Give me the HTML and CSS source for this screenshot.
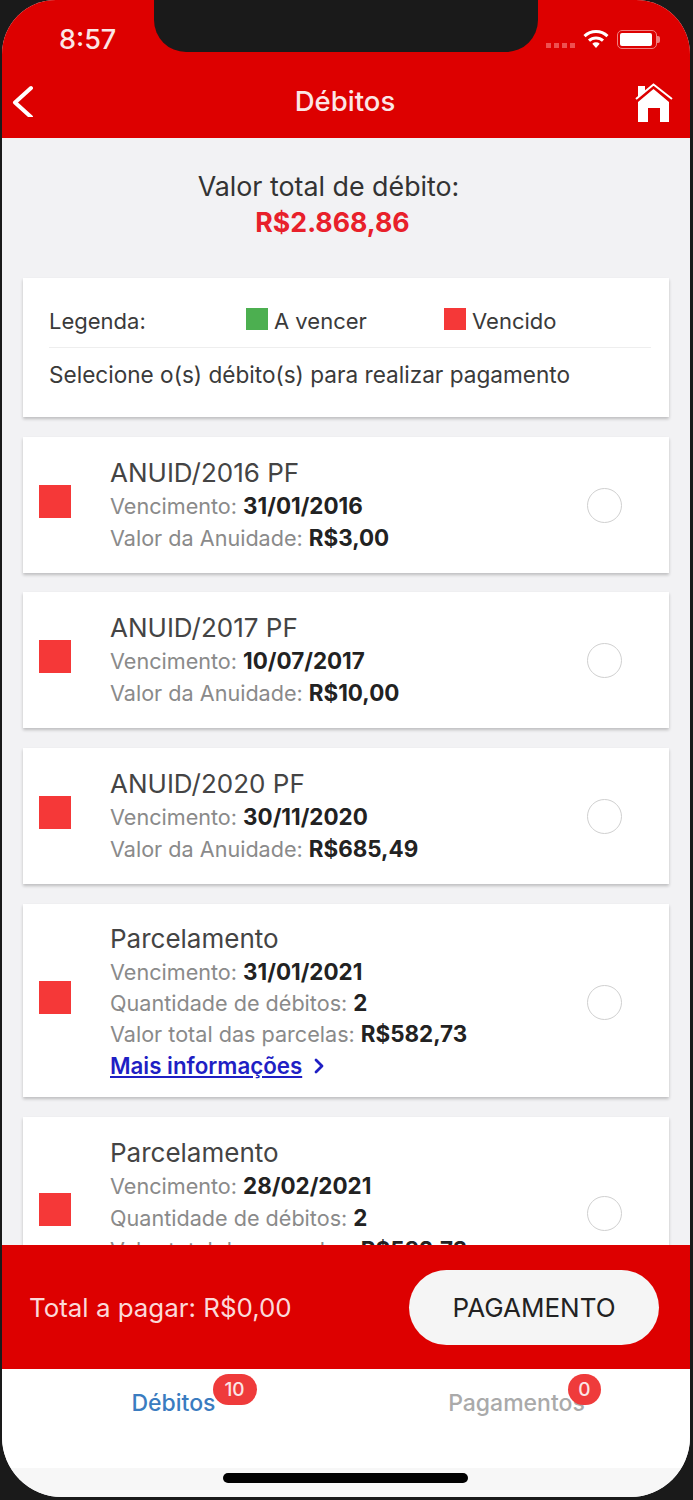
FILE: index.html
```html
<!DOCTYPE html>
<html lang="pt-BR">
<head>
    <meta charset="UTF-8">
    <meta name="viewport" content="width=device-width, initial-scale=1.0">
    <title>Débitos</title>
    <link rel="stylesheet" href="styles.css">
</head>
<body>
    <div class="screen">
        <div class="notch"></div>
        <header class="top">
            <div class="status">
                <span class="time">8:57</span>
                <div class="status-icons">
                    <div class="signal"><i></i><i></i><i></i><i></i></div>
                    <svg class="wifi" viewBox="0 0 26 20">
                        <path d="M1.5 7.2a16.5 16.5 0 0 1 23 0" fill="none" stroke="#fff" stroke-width="3"/>
                        <path d="M6 11.7a10.2 10.2 0 0 1 14 0" fill="none" stroke="#fff" stroke-width="3"/>
                        <path d="M9.3 14.8a5.4 5.4 0 0 1 7.4 0L13 19z" fill="#fff"/>
                    </svg>
                    <div class="battery"><div class="battery-fill"></div></div>
                </div>
            </div>
            <nav class="nav">
                <svg class="back" viewBox="0 0 26 32">
                    <path d="M22 3 6 17.5 22 32" fill="none" stroke="#fff" stroke-width="4" stroke-linecap="round" stroke-linejoin="round"/>
                </svg>
                <h1>Débitos</h1>
                <svg class="home" viewBox="0 0 38 39">
                    <path d="M3 3h7v5l-7 6z" fill="#fff"/>
                    <path d="M1 16 18.5 1.5 37 16" fill="none" stroke="#fff" stroke-width="2"/>
                    <path d="M18.5 6 3 19v20h10V25h12v14h9V19z" fill="#fff"/>
                </svg>
            </nav>
        </header>

        <main class="content">
            <section class="total">
                <p class="total-label">Valor total de débito:</p>
                <p class="total-value">R$2.868,86</p>
            </section>

            <section class="card legend">
                <div class="legend-row">
                    <span class="legend-title">Legenda:</span>
                    <span class="legend-item legend-green"><i class="swatch green"></i>A vencer</span>
                    <span class="legend-item"><i class="swatch red"></i>Vencido</span>
                </div>
                <p class="legend-hint">Selecione o(s) débito(s) para realizar pagamento</p>
            </section>

            <article class="card debt">
                <i class="mark"></i>
                <div class="debt-info">
                    <h2>ANUID/2016 PF</h2>
                    <p>Vencimento: <b>31/01/2016</b></p>
                    <p>Valor da Anuidade: <b>R$3,00</b></p>
                </div>
                <i class="radio"></i>
            </article>

            <article class="card debt">
                <i class="mark"></i>
                <div class="debt-info">
                    <h2>ANUID/2017 PF</h2>
                    <p>Vencimento: <b>10/07/2017</b></p>
                    <p>Valor da Anuidade: <b>R$10,00</b></p>
                </div>
                <i class="radio"></i>
            </article>

            <article class="card debt">
                <i class="mark"></i>
                <div class="debt-info">
                    <h2>ANUID/2020 PF</h2>
                    <p>Vencimento: <b>30/11/2020</b></p>
                    <p>Valor da Anuidade: <b>R$685,49</b></p>
                </div>
                <i class="radio"></i>
            </article>

            <article class="card debt debt-compact">
                <i class="mark"></i>
                <div class="debt-info">
                    <h2>Parcelamento</h2>
                    <p>Vencimento: <b>31/01/2021</b></p>
                    <p>Quantidade de débitos: <b>2</b></p>
                    <p>Valor total das parcelas: <b>R$582,73</b></p>
                    <p class="more">
                        <a href="#">Mais informações</a>
                        <svg class="more-arrow" viewBox="0 0 12 18">
                            <path d="m3 3 6 6-6 6" fill="none" stroke="#1f1fc4" stroke-width="2.8" stroke-linecap="round" stroke-linejoin="round"/>
                        </svg>
                    </p>
                </div>
                <i class="radio"></i>
            </article>

            <article class="card debt debt-cut">
                <i class="mark"></i>
                <div class="debt-info">
                    <h2>Parcelamento</h2>
                    <p>Vencimento: <b>28/02/2021</b></p>
                    <p>Quantidade de débitos: <b>2</b></p>
                    <p>Valor total das parcelas: <b>R$582,73</b></p>
                </div>
                <i class="radio"></i>
            </article>
        </main>

        <div class="paybar">
            <span class="paybar-total">Total a pagar: R$0,00</span>
            <button class="pay-btn">PAGAMENTO</button>
        </div>

        <footer class="tabs">
            <div class="tab tab-active">
                <span class="tab-label">Débitos<span class="badge badge-wide">10</span></span>
            </div>
            <div class="tab tab-idle">
                <span class="tab-label">Pagamentos<span class="badge">0</span></span>
            </div>
            <div class="home-bar"></div>
        </footer>
    </div>
</body>
</html>
```

FILE: styles.css
```css
* {
    box-sizing: border-box;
}

html, body {
    margin: 0;
    height: 1500px;
    background: #1a1a1a;
    font-family: Inter, "Liberation Sans", sans-serif;
    overflow: hidden;
}

h1, h2, p {
    margin: 0;
    font-weight: 400;
}

i {
    display: block;
}

.screen {
    position: relative;
    display: flex;
    flex-direction: column;
    width: 688px;
    height: 1497px;
    margin-left: 2px;
    border-radius: 54px 54px 60px 60px;
    overflow: hidden;
    background: #f2f2f4;
}

.notch {
    position: absolute;
    top: 0;
    left: 152px;
    width: 384px;
    height: 52px;
    background: #1a1a1a;
    border-radius: 0 0 32px 32px;
}

/* header */
.top {
    flex: none;
    height: 138px;
    background: #dd0000;
    color: #fff;
}

.status {
    display: flex;
    justify-content: space-between;
    align-items: center;
    height: 64px;
    padding: 14px 33px 0 57px;
}

.time {
    font-size: 27px;
    font-weight: 500;
    color: #fbe6e6;
}

.status-icons {
    display: flex;
    align-items: center;
    gap: 8px;
}

.signal {
    display: flex;
    gap: 3px;
    margin-top: 12px;
}

.signal i {
    width: 5px;
    height: 5px;
    background: #ee5050;
}

.wifi {
    width: 26px;
    height: 20px;
}

.battery {
    position: relative;
    width: 40px;
    height: 19px;
    padding: 2px;
    border: 1px solid #f08080;
    border-radius: 5px;
}

.battery::after {
    content: "";
    position: absolute;
    top: 5px;
    right: -4px;
    width: 3px;
    height: 7px;
    border-radius: 0 2px 2px 0;
    background: #f08080;
}

.battery-fill {
    width: 32px;
    height: 100%;
    background: #fff;
    border-radius: 2px;
}

.nav {
    display: flex;
    align-items: center;
    height: 74px;
    padding: 0 17px 0 7px;
}

.nav h1 {
    flex: 1;
    padding-left: 20px;
    font-size: 27.5px;
    font-weight: 500;
    text-align: center;
    color: #fbe6e6;
}

.back {
    width: 26px;
    height: 32px;
}

.home {
    width: 38px;
    height: 39px;
    margin-top: 3px;
}

/* content */
.content {
    flex: 1;
    min-height: 0;
    overflow: hidden;
    padding: 0 21px;
}

.total {
    height: 140px;
    padding-top: 31px;
    padding-right: 35px;
    text-align: center;
}

.total-label {
    font-size: 26.8px;
    line-height: 34px;
    color: #333;
}

.total-value {
    font-size: 26.7px;
    line-height: 38px;
    font-weight: 700;
    color: #e8202a;
    margin-left: 8px;
}

.card {
    background: #fff;
    box-shadow: 0 2px 3px rgba(0, 0, 0, 0.22);
}

.legend {
    height: 139px;
    padding: 22px 18px 0 26px;
    margin-bottom: 20px;
    font-size: 22px;
    color: #3a3a3a;
}

.legend-row {
    display: flex;
    align-items: center;
    height: 48px;
    padding-bottom: 6px;
    border-bottom: 1px solid #eeeeee;
}

.legend-title {
    width: 197px;
}

.legend-item {
    display: flex;
    align-items: center;
    gap: 6px;
}

.legend-green {
    width: 198px;
}

.swatch {
    width: 22px;
    height: 22px;
    margin-top: -4px;
}

.green {
    background: #4caf50;
}

.red {
    background: #f53838;
}

.legend-hint {
    margin-top: 12px;
    font-size: 22.6px;
    line-height: 30px;
}

.debt {
    display: flex;
    align-items: center;
    padding: 20px 47px 19px 16px;
    margin-bottom: 20px;
}

.debt:first-of-type {
    margin-bottom: 19px;
}

.mark {
    flex: none;
    width: 32px;
    height: 33px;
    margin-bottom: 9px;
    background: #f53838;
}

.debt-info {
    flex: 1;
    padding-left: 39px;
    font-size: 21.6px;
    line-height: 32px;
    color: #8a8a8a;
}

.debt-info h2 {
    margin-bottom: 1px;
    font-size: 26px;
    line-height: 32px;
    color: #444;
}

.debt-info b {
    color: #222;
    font-size: 22.4px;
    font-weight: 700;
    line-height: 1;
}

.radio {
    flex: none;
    width: 35px;
    height: 35px;
    border: 1.5px solid #d0d0d0;
    border-radius: 50%;
}

.debt-compact {
    padding: 19px 47px 16px 16px;
}

.debt-compact .debt-info {
    line-height: 31px;
}

.debt-compact h2 {
    margin-bottom: 2px;
}

/* last card runs under the pay bar */
.debt-cut {
    height: 193px;
    padding-bottom: 20px;
}

.debt-cut .debt-info {
    align-self: flex-start;
}

.more {
    display: flex;
    align-items: center;
    gap: 11px;
}

.more a {
    color: #1f1fc4;
    font-size: 22.3px;
    font-weight: 600;
}

.more-arrow {
    width: 12px;
    height: 18px;
}

/* bottom */
.paybar {
    flex: none;
    display: flex;
    justify-content: space-between;
    align-items: center;
    height: 124px;
    padding: 1px 31px 0 27px;
    background: #dd0000;
}

.paybar-total {
    font-size: 25.9px;
    color: #fbd9d9;
}

.pay-btn {
    width: 250px;
    height: 75px;
    border: 0;
    border-radius: 38px;
    background: #f5f5f5;
    font-family: inherit;
    font-size: 26px;
    color: #222;
}

.tabs {
    position: relative;
    flex: none;
    display: flex;
    height: 128px;
    background: linear-gradient(#fff 99px, #f7f7f7 99px);
}

.tab {
    flex: 1;
    display: flex;
    justify-content: center;
    padding-top: 19px;
    color: #aaaaaa;
}

.tab-active {
    color: #3a7cc0;
}

.tab-idle {
    padding-right: 2px;
}

.tab-label {
    position: relative;
    height: 30px;
    font-size: 23px;
    font-weight: 500;
    line-height: 30px;
}

.badge {
    position: absolute;
    top: -14px;
    right: -16px;
    min-width: 33px;
    height: 31px;
    padding: 0 8px;
    border-radius: 16px;
    background: #ef3b3b;
    color: #fbe6e6;
    font-size: 19px;
    line-height: 31px;
    text-align: center;
}

.badge-wide {
    right: -41px;
    width: 44px;
}

.home-bar {
    position: absolute;
    left: 221px;
    bottom: 14px;
    width: 245px;
    height: 10px;
    border-radius: 5px;
    background: #000;
}
```
